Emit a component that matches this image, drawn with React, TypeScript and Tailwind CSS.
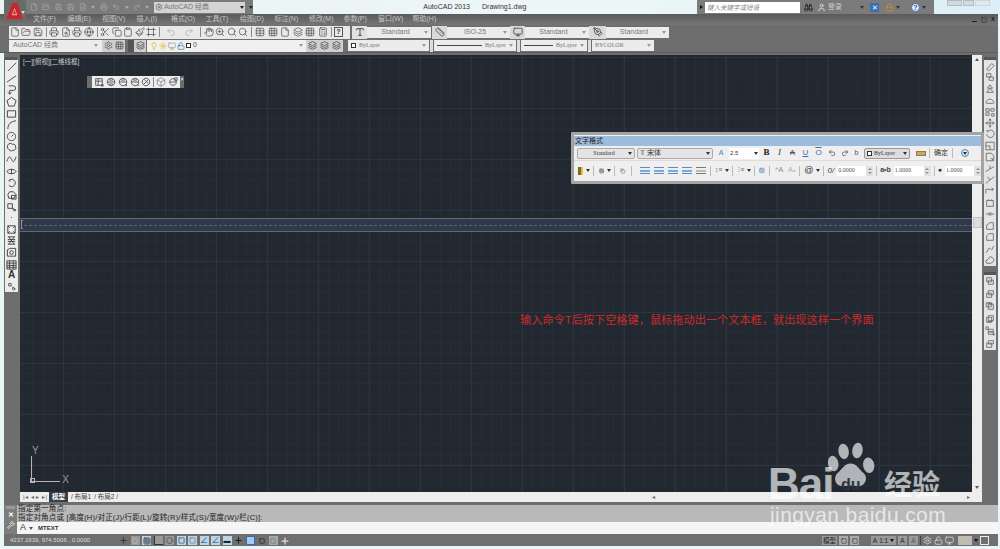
import {
  File, FolderOpen, Save, Printer, FileSearch, Scissors, Copy, Clipboard, Paintbrush, Undo2, Redo2, Hand,
  ZoomIn, Search, Grid3x3, Table, Box, Layers, Calculator, Settings, Sun, Lightbulb, LockOpen, Lock, User, Binoculars, Globe,
  Type, Ruler, Monitor, PenTool, Plus, Square, Circle, Frame, Wrench,
} from 'lucide-react';
import type { LucideIcon } from 'lucide-react';

const font = 'font-["Liberation_Sans","Noto_Sans_CJK_SC",sans-serif]';

const leftTools = [
  'M2 11 11 2',
  'M1 10 11 3M1 10h.1M11 3h.1',
  'M3 2h5a2.500 2.500 0 0 1 0 5H4v4l-2-2m2 2 2-2',
  'M6 1.500 11 5 9 11H3L1 5Z',
  'M1.500 3h9v7h-9Z',
  'M2 11C2 6 5 2.500 11 2',
  'M6 1.500a4.500 4.500 0 1 0 .01 0M6 6l2-2',
  'M3 2c2-1 3 0 4 .5 2-.5 4 1 3.500 3 1 2-1 4-3 3.500-2 1.500-4 .5-4.500-1C1 7 1 3.500 3 2Z',
  'M1 8c2-6 3-6 5-2s3 3 5-3',
  'M1 6c1-3 9-3 10 0-1 3-9 3-10 0ZM6 3v6',
  'M3 4a4 4 0 1 1 0 5M3 4l2 .5',
  'M4 3h4l3 3-2 4H3L2 6ZM6 7h5v4H6Z',
  'M2 3h5v5H2ZM7 8l4 2-2 1Z',
  'M5.500 6h1',
  'M2 2h8v8H2ZM2 2l2 2M10 2 8 4M2 10l2-2M10 10 8 8',
  'M2 2h8M2 10h8M3 2l6 8M9 2l-6 8M2 5h8M2 7h8',
  'M1.500 10V3l3-1.500h6V10ZM4 6a2 2 0 1 0 4 0 2 2 0 1 0-4 0',
  'M1 2h10v9H1ZM1 4.500h10M1 7h10M1 9h10M4 2v9M8 2v9',
];

const rightTools = [
  'M2 10 8 3l3 2.500-5.500 5.500H3Z',
  'M2 2h5v4H2ZM5 6h5v4H5Z',
  'M6 1 3 5h6L6 1ZM6 5 2 10h8Z',
  'M1 10c1-4 3-5 5-5s4 1 5 5M2 10h8',
  'M1 2h4v3H1ZM7 2h4v3H7ZM1 7h4v3H1ZM8 8h3v3H8Z',
  'M6 1v10M1 6h10M6 1 4.500 3M6 1l1.500 2M6 11 4.500 9M6 11l1.500-2M1 6l2-1.500M1 6l2 1.500M11 6 9 4.500M11 6 9 7.500',
  'M4 2a4.500 4.500 0 1 1-2 4M4 2 1.500 2.500M4 2 3.500 4',
  'M1 1.500h10v9H1ZM1 6h5v4.500',
  'M1.500 1.500h6l3 3v6h-9ZM7 8h2v2',
  'M1 9 11 3M6 2v4',
  'M1 10 11 2M3 2l3 4',
  'M1 9V4h9M8 2l2 2-2 2',
  'M2 3h8v7H2ZM4 3V1.500M8 3V1.500',
  'M1 6h4M7 6h4M5 4v4M7 4v4',
  'M2 10V5l4-3h4v8Z',
  'M2 10V6c0-2 2-4 4-4h4v8Z',
  'M1 10c3 0 2-5 4-5s2 2 3 2 1-4 3-5',
  'M2 10 1 7l3-2 2-3 3 1 2 3-2 3-3 1Z',
];

const orderTools = [
  'M2 2h6v5H2ZM4 5h6v5H4Z',
  'M4 2h6v5H4ZM2 5h6v5H2Z',
  'M1.500 2h6v5h-6ZM4 4h6v6H4ZM3 3h6',
  'M4 2h6v6H4ZM2 4h6v6H2ZM3 9h6',
  'M1 1h3v3H1ZM4 4h6v3H4ZM4 7h6v3H4ZM10 9h1v2h-1Z',
  'M4 2h6v4H4ZM2 5h6v5H2Z',
];

const view3d = [
  'M2 2h8v8H2ZM2 5h8M5 2v8M9 9h2v2H9Z',
  'M6 1.500a4.500 4.500 0 1 0 .01 0M1.500 6h9M3 3c2 1 4 1 6 0M3 9c2-1 4-1 6 0',
  'M6 1.500a4.500 4.500 0 1 0 .01 0M1.500 6h9M3 3c2 1 4 1 6 0M10 9v2M9 10h2',
  'M6 1.500a4.500 4.500 0 1 0 .01 0M1.500 6h9M3 3c2 1 4 1 6 0M9 10h2',
  'M6 1.500a4.500 4.500 0 1 0 .01 0M3 9l6-6M4 3l5 5',
];

// small stroke drawing on a 12 unit box
function Glyph({ d, size = 10, cls = 'text-[#4a4a4a]' }: { d: string; size?: number; cls?: string }) {
  return (
    <svg viewBox="0 0 12 12" width={size} height={size} fill="none" stroke="currentColor" strokeWidth="1" className={`shrink-0 ${cls}`}>
      <path d={d} />
    </svg>
  );
}

function Sep({ h = 'h-[10px]', c = 'bg-[#8a8a8a]' }: { h?: string; c?: string }) {
  return <div className={`w-px shrink-0 ${h} ${c}`} />;
}

function Caret({ cls = 'border-t-[#666]' }: { cls?: string }) {
  return <span className={`w-0 h-0 shrink-0 border-x-[2px] border-x-transparent border-t-[3px] ${cls}`} />;
}

function Tool({ icon: Icon, cls = 'text-[#444]', w = 'w-[11.500px]' }: { icon: LucideIcon; cls?: string; w?: string }) {
  return (
    <div className={`${w} flex justify-center shrink-0`}>
      <Icon size={10} strokeWidth={1.6} className={cls} />
    </div>
  );
}

function Select({ label, w, center = true, mono = false, line = false, swatch = false }: { label: string; w: string; center?: boolean; mono?: boolean; line?: boolean; swatch?: boolean }) {
  return (
    <div className={`${w} h-[11px] bg-[#ececec] flex items-center gap-[3px] px-[3px] shrink-0`}>
      {swatch && <span className="w-[5px] h-[5px] border border-[#333] bg-white shrink-0" />}
      {line && <span className="flex-1 h-px bg-[#444]" />}
      <span className={`${center && !line ? 'flex-1 text-center' : ''} ${!center && !line ? 'flex-1' : ''} text-[#777] whitespace-nowrap ${mono ? 'text-[6px] font-["Liberation_Serif",serif] text-[#555]' : 'text-[7px]'}`}>{label}</span>
      <Caret cls="border-t-[#999]" />
    </div>
  );
}

function ToolbarOne() {
  const a: LucideIcon[] = [File, FolderOpen, Save];
  const b: LucideIcon[] = [Printer, FileSearch, Printer, Globe];
  const c: LucideIcon[] = [Scissors, Copy, Clipboard, Paintbrush, Frame];
  const d: LucideIcon[] = [Hand, ZoomIn, Search, Search];
  const e: LucideIcon[] = [Table, Grid3x3, File, Layers, Grid3x3, Calculator];
  return (
    <div className="h-[14px] flex items-center bg-[#6e6e6e] pl-[9px]">
      <div className="w-[341px] h-[13px] bg-[#e9e9e9] flex items-center shrink-0">
        {a.map((I, i) => <Tool key={i} icon={I} />)}
        <div className="mx-[2px]"><Sep /></div>
        {b.map((I, i) => <Tool key={i} icon={I} />)}
        <div className="mx-[2px]"><Sep /></div>
        {c.map((I, i) => <Tool key={i} icon={I} />)}
        <div className="mx-[2px]"><Sep /></div>
        <Tool icon={Undo2} cls="text-[#aaa]" w="w-[18px]" />
        <Tool icon={Redo2} cls="text-[#aaa]" w="w-[18px]" />
        <div className="mx-[2px]"><Sep /></div>
        {d.map((I, i) => <Tool key={i} icon={I} />)}
        <div className="mx-[2px]"><Sep /></div>
        {e.map((I, i) => <Tool key={i} icon={I} w="w-[12.500px]" />)}
        <div className="mx-[2px]"><Sep /></div>
        <div className="w-[9px] h-[10px] border border-[#555] text-[7px] leading-[8px] text-center font-bold text-[#333]">?</div>
      </div>
      <div className="w-[15px] h-[13px] ml-[2px] bg-[#e0e0e0] flex justify-center items-center shrink-0"><Type size={10} className="text-[#333]" /></div>
      <Select label="Standard" w="w-[64px]" />
      <div className="w-[15px] h-[13px] ml-[1px] bg-[#d8d8d8] flex justify-center items-center shrink-0"><Ruler size={10} className="text-[#444]" /></div>
      <Select label="ISO-25" w="w-[63px]" />
      <div className="w-[15px] h-[13px] bg-[#d8d8d8] flex justify-center items-center shrink-0"><Monitor size={10} className="text-[#444]" /></div>
      <Select label="Standard" w="w-[64px]" />
      <div className="w-[17px] h-[13px] bg-[#d8d8d8] flex justify-center items-center shrink-0"><PenTool size={10} className="text-[#444]" /></div>
      <Select label="Standard" w="w-[63px]" />
    </div>
  );
}

function ToolbarTwo() {
  return (
    <div className="h-[14px] flex items-center bg-[#6e6e6e] pl-[9px] border-b border-[#5c5c5c]">
      <div className="w-[93px] h-[12px] bg-[#ececec] flex items-center px-[4px] shrink-0">
        <span className="flex-1 text-[7px] text-[#777]">AutoCAD 经典</span>
        <Caret cls="border-t-[#999]" />
      </div>
      <div className="w-[23px] h-[12px] bg-[#cfcfcf] flex items-center justify-center gap-[2px] shrink-0">
        <Settings size={9} className="text-[#555]" />
        <Grid3x3 size={9} className="text-[#555]" />
      </div>
      <div className="w-[6px] h-[12px] bg-[#555] shrink-0 ml-[3px]" />
      <div className="w-[12px] h-[12px] bg-[#cfcfcf] flex justify-center items-center shrink-0"><Layers size={9} className="text-[#444]" /></div>
      <div className="w-[159px] h-[12px] ml-[1px] bg-[#f0f0f0] flex items-center gap-[1px] px-[3px] shrink-0">
        <Lightbulb size={8} className="text-[#d9b400]" />
        <Sun size={8} className="text-[#d9b400]" />
        <Monitor size={8} className="text-[#999]" />
        <LockOpen size={8} className="text-[#2f6fb5]" />
        <span className="w-[5px] h-[5px] border border-[#333] bg-white" />
        <span className="flex-1 ml-[1px] text-[7px] text-[#555]">0</span>
        <Caret cls="border-t-[#999]" />
      </div>
      <div className="w-[37px] h-[12px] bg-[#cfcfcf] flex items-center justify-around shrink-0">
        <Layers size={9} className="text-[#444]" />
        <Layers size={9} className="text-[#444]" />
        <Layers size={9} className="text-[#444]" />
      </div>
      <div className="w-[5px] shrink-0" />
      <Select label="ByLayer" w="w-[81px]" center={false} mono swatch />
      <div className="w-[3px] h-[12px] mx-[1px] bg-[#ddd]" />
      <Select label="ByLayer" w="w-[82px]" mono line />
      <div className="w-[3px] h-[12px] mx-[1px] bg-[#ddd]" />
      <Select label="ByLayer" w="w-[66px]" mono line />
      <div className="w-[3px] h-[12px] mx-[1px] bg-[#ddd]" />
      <Select label="BYCOLOR" w="w-[62px]" center={false} mono />
    </div>
  );
}

function TextFormat() {
  const Num = ({ v, w }: { v: string; w: string }) => (
    <div className={`${w} h-[10px] bg-white flex items-center justify-between text-[6px] text-[#555] font-["Liberation_Serif",serif] shrink-0`}>
      <span className="pl-[1px]">{v}</span>
      <span className="w-[7px] h-[10px] bg-[#e2e2e2] flex flex-col items-center justify-around py-[1px]">
        <span className="w-0 h-0 border-x-[2px] border-x-transparent border-b-[2px] border-b-[#7a93b5]" />
        <span className="w-0 h-0 border-x-[2px] border-x-transparent border-t-[2px] border-t-[#7a93b5]" />
      </span>
    </div>
  );
  return (
    <div className={`absolute left-[571px] top-[132px] w-[413px] h-[52px] bg-[#efefef] border-[3px] border-[#a3a3a3] rounded-[1px] flex flex-col ${font}`}>
      <div className="h-[10px] mt-[1px] bg-[#9dbbdb] text-[7px] leading-[10px] text-[#222] pl-[1px]">文字格式</div>
      <div className="h-[15px] flex items-center gap-[2px] pl-[3px] border-b border-[#dcdcdc] text-[#333]">
        <div className="w-[58px] h-[11px] border border-[#aaa] rounded-[2px] bg-[#e4e4e4] flex items-center px-[2px]">
          <span className="flex-1 text-center text-[6px] font-['Liberation_Serif',serif]">Standard</span><Caret cls="border-t-[#333]" />
        </div>
        <div className="w-[76px] h-[11px] border border-[#aaa] rounded-[2px] bg-[#e4e4e4] flex items-center px-[2px]">
          <span className="flex-1 text-[7px]">𝕋 宋体</span><Caret cls="border-t-[#333]" />
        </div>
        <span className="w-[12px] text-center text-[7px] text-[#4a7db5]">A</span>
        <div className="w-[30px] h-[11px] bg-white flex items-center px-[1px] text-[6px]">
          <span className="flex-1">2.5</span><Caret cls="border-t-[#333]" />
        </div>
        <span className="w-[11px] text-center text-[9px] font-bold font-['Liberation_Serif',serif] text-[#222]">B</span>
        <span className="w-[11px] text-center text-[9px] italic font-['Liberation_Serif',serif] text-[#444]">I</span>
        <span className="w-[11px] text-center text-[8px] line-through text-[#555]">A</span>
        <span className="w-[11px] text-center text-[8px] underline text-[#3a6fb0]">U</span>
        <span className="w-[11px] text-center text-[8px] overline text-[#3a6fb0]">O</span>
        <Undo2 size={8} className="text-[#444] mx-[1.500px]" />
        <Redo2 size={8} className="text-[#444] mx-[1.500px]" />
        <span className="w-[9px] text-center text-[7px] text-[#555]">b</span>
        <div className="w-[46px] h-[11px] ml-[1px] border border-[#999] rounded-[2px] bg-[#ddd] flex items-center gap-[2px] px-[2px]">
          <span className="w-[5px] h-[5px] border border-[#333] bg-white" />
          <span className="flex-1 text-[6px] font-['Liberation_Serif',serif]">ByLayer</span><Caret cls="border-t-[#333]" />
        </div>
        <div className="w-[10px] h-[5px] ml-[4px] bg-[#c9a860] border border-[#8f7a4a]" />
        <div className="ml-[1px]"><Sep c="bg-[#bbb]" /></div>
        <span className="mx-[2px] text-[7px] text-[#333]">确定</span>
        <Sep c="bg-[#bbb]" />
        <div className="ml-[6px] w-[8px] h-[8px] rounded-full border border-[#5f82ad] bg-[#d8e4f2] flex items-center justify-center"><Caret cls="border-t-[#234]" /></div>
      </div>
      <div className="h-[19px] flex items-center gap-[3px] pl-[4px] text-[#555] whitespace-nowrap">
        <span className="w-[7px] h-[8px] bg-[#7a6a20] border-r-2 border-[#e0c040]" /><Caret cls="border-t-[#333]" /><Sep c="bg-[#bbb]" />
        <Grid3x3 size={8} className="ml-[2px]" /><Caret cls="border-t-[#333]" /><Sep c="bg-[#bbb]" />
        <Copy size={8} className="mx-[2px]" /><Sep c="bg-[#bbb]" />
        <div className="w-[2px] shrink-0" />
        {[0, 1, 2, 3, 4].map(i => (
          <div key={i} className="w-[10px] h-[7px] mx-[0.500px] flex flex-col justify-between shrink-0">
            <span className={`h-px ${i === 4 ? 'bg-[#777]' : 'bg-[#5a8ccc]'}`} />
            <span className={`h-[2px] ${i === 4 ? 'bg-[#bbb]' : 'bg-[#7fa8dc]'}`} />
            <span className={`h-px ${i === 4 ? 'bg-[#777]' : 'bg-[#5a8ccc]'}`} />
          </div>
        ))}
        <Sep c="bg-[#bbb]" />
        <span className="ml-[1px] text-[7px] text-[#4a6f9c]">↕≡</span><Caret cls="border-t-[#333]" /><Sep c="bg-[#bbb]" />
        <span className="ml-[2px] text-[7px] text-[#4a6f9c]">⁝≡</span><Caret cls="border-t-[#333]" /><Sep c="bg-[#bbb]" />
        <Table size={9} className="mx-[1px] text-[#4a7db5]" /><Sep c="bg-[#bbb]" />
        <span className="mx-[2px] text-[7px] text-[#888]">ᴬA</span>
        <span className="mr-[1px] text-[7px] text-[#aaa]">Aₐ</span><Sep c="bg-[#bbb]" />
        <span className="ml-[1px] text-[9px] text-[#333]">@</span><Caret cls="border-t-[#333]" /><Sep c="bg-[#bbb]" />
        <span className="text-[8px] italic text-[#444]">0/</span>
        <Num v="0.0000" w="w-[36px]" />
        <Sep c="bg-[#bbb]" />
        <span className="text-[7px] font-bold text-[#444]">a•b</span>
        <Num v="1.0000" w="w-[37px]" />
        <Sep c="bg-[#bbb]" />
        <span className="text-[7px] font-bold text-[#333]">●</span>
        <Num v="1.0000" w="w-[36px]" />
      </div>
    </div>
  );
}

function Watermark() {
  return (
    <div className="absolute left-[768px] top-[442px] w-[180px] h-[90px] text-white/65 pointer-events-none">
      <svg viewBox="0 0 60 56" width="52" height="50" className="absolute left-[60px] top-0" fill="currentColor">
        <ellipse cx="18" cy="10" rx="6" ry="9" transform="rotate(-8 18 10)" />
        <ellipse cx="34" cy="9" rx="6" ry="9" transform="rotate(8 34 9)" />
        <ellipse cx="6" cy="24" rx="6" ry="9" transform="rotate(-10 6 24)" />
        <ellipse cx="47" cy="26" rx="6.500" ry="9" transform="rotate(-10 47 26)" />
        <path d="M26 24c7 0 10 7 15 11 6 5 2 17-8 15-5-1-9-1-14 0-10 2-14-9-8-15 5-4 8-11 15-11Z" />
      </svg>
      <div className="absolute left-0 top-[24px] text-[44px] leading-[36px] font-bold font-['Liberation_Sans',sans-serif] tracking-[-1px]">Bai</div>
      <div className="absolute left-[73px] top-[35px] text-[16px] leading-[16px] font-bold text-[#2b3440] font-['Liberation_Sans',sans-serif]">du</div>
      <div className="absolute left-[116px] top-[25px] text-[28px] leading-[32px] font-bold font-['Noto_Sans_CJK_SC',sans-serif] whitespace-nowrap">经验</div>
      <div className="absolute left-[2px] top-[63px] text-[21px] leading-[20px] tracking-[0.400px] font-['Liberation_Sans',sans-serif] whitespace-nowrap">jingyan.baidu.com</div>
    </div>
  );
}

function Canvas() {
  return (
    <div className="flex-1 relative overflow-hidden bg-[#212830] bg-[linear-gradient(#2c3440_1px,transparent_1px),linear-gradient(90deg,#2c3440_1px,transparent_1px),linear-gradient(#262d37_1px,transparent_1px),linear-gradient(90deg,#262d37_1px,transparent_1px)] bg-[size:51px_51px,51px_51px,10.200px_10.200px,10.200px_10.200px] bg-[position:0_2px,43px_0,0_2px,43px_0]">
      <div className="absolute left-[3px] top-[2px] text-[6.500px] leading-[9px] text-[#d0d0d0] whitespace-nowrap">[一][俯视][二维线框]</div>
      <div className="absolute left-[67px] top-[21px] h-[12px] flex">
        <div className="w-[5px] bg-[#6c6c6c]" />
        <div className="w-[88px] bg-[#ededed] flex items-center justify-around px-[1px]">
          {view3d.map(d => <Glyph key={d} d={d} />)}
          <Sep />
          <Box size={10} strokeWidth={1.3} className="text-[#555]" />
          <Glyph d="M6 2a4 4 0 1 0 .01 0M2 6h8M8 1h3v3H8Z" />
        </div>
        <div className="w-[4px] bg-[#6c6c6c] text-[5px] leading-[6px] text-white text-center">×</div>
      </div>
      <div className="absolute left-0 right-0 top-[163px] h-[14px] bg-[#2e3a49] border-y border-[#6b6864]">
        <div className="absolute left-[1px] top-[1px] w-[2px] h-[9px] border-l border-y border-[#9a958c]" />
        <div className="absolute left-[4px] right-0 top-[6px] border-t border-dashed border-[#5d6672]" />
      </div>
      <div className={`absolute left-[500px] top-[257px] text-[11.200px] leading-[16px] text-[#cc2a2a] whitespace-nowrap ${font}`}>输入命令T后按下空格键，鼠标拖动出一个文本框，就出现这样一个界面</div>
      <div className="absolute left-[10px] bottom-[9px] w-[30px] h-[36px] text-[#9a9a9a]">
        <div className="absolute left-[1px] top-[9px] bottom-0 w-px bg-[#b5b5b5]" />
        <div className="absolute left-[1px] right-0 bottom-[1px] h-px bg-[#b5b5b5]" />
        <div className="absolute left-0 bottom-0 w-[5px] h-[5px] border border-[#b5b5b5]" />
        <div className="absolute left-[2px] top-[-1px] text-[10px] leading-[10px]">Y</div>
        <div className="absolute right-[-9px] bottom-[-2px] text-[10px] leading-[10px]">X</div>
      </div>
    </div>
  );
}

export default function App() {
  const menus = ['文件(F)', '编辑(E)', '视图(V)', '插入(I)', '格式(O)', '工具(T)', '绘图(D)', '标注(N)', '修改(M)', '参数(P)', '窗口(W)', '帮助(H)'];
  return (
    <div className={`relative w-[1000px] h-[549px] overflow-hidden bg-[#eaf5f6] flex flex-col ${font}`}>
      {/* title strip */}
      <div className="h-[14px] flex shrink-0 bg-[linear-gradient(90deg,#e8f3f4,#eef7f7_60%,#dceef6)]">
        <div className="w-[245px] ml-[8px] h-full bg-[#7b7b7b] flex items-center pl-[22px] gap-[4.500px] shrink-0">
          <File size={8} className="text-[#aaa]" />
          <FolderOpen size={8} className="text-[#aaa]" />
          <Save size={8} className="text-[#aaa]" />
          <Save size={8} className="text-[#aaa]" />
          <FileSearch size={8} className="text-[#aaa]" />
          <Caret cls="border-t-[#aaa]" />
          <Printer size={8} className="text-[#aaa]" />
          <Undo2 size={8} className="text-[#aaa]" />
          <Caret cls="border-t-[#aaa]" />
          <Redo2 size={8} className="text-[#aaa]" />
          <Caret cls="border-t-[#aaa]" />
          <div className="w-[93px] h-[11px] bg-[#d3d3d3] flex items-center gap-[1px] px-[1px]">
            <Settings size={8} className="text-[#666]" />
            <span className="flex-1 text-[7px] text-[#777]">AutoCAD 经典</span>
            <Caret cls="border-t-[#222]" />
          </div>
          <Caret cls="border-t-[#222]" />
        </div>
        <div className="w-[217px] flex items-center justify-end text-[7px] text-[#333] whitespace-nowrap">AutoCAD 2013</div>
        <div className="ml-[12px] flex items-center text-[7px] text-[#333] whitespace-nowrap">Drawing1.dwg</div>
        <div className="flex-1" />
        <div className="w-[237px] mr-[66px] h-full bg-[#7b7b7b] flex items-center pl-[3px] gap-[2px] text-[#ccc] shrink-0">
          <span className="w-0 h-0 border-y-[2px] border-y-transparent border-l-[3px] border-l-[#111]" />
          <div className="w-[95px] h-[11px] bg-white text-[6.500px] leading-[11px] pl-[2px] italic text-[#888]">键入关键字或短语</div>
          <Binoculars size={9} className="ml-[2px] text-[#222]" />
          <User size={9} className="ml-[2px] text-[#eee]" />
          <span className="flex-1 text-[7px]">登录</span>
          <Caret cls="border-t-[#333]" />
          <div className="w-[9px] h-[9px] ml-[4px] bg-[#3a6fb0] text-[7px] leading-[9px] text-center text-white">✕</div>
          <Lock size={9} className="ml-[4px] text-[#e08a30]" />
          <Caret cls="border-t-[#333]" />
          <div className="w-[9px] h-[9px] ml-[9px] rounded-full bg-[#eef] border border-[#3a6fb0] text-[7px] leading-[8px] text-center font-bold text-[#2a5a9a]">?</div>
          <Caret cls="border-t-[#333]" />
          <div className="w-[6px]" />
        </div>
      </div>
      <div className="absolute left-[947px] top-0 h-[6px] flex gap-[1px]">
        <div className="w-[15px] h-[6px] bg-[#cfdbe1] border border-[#b0bdc4]" />
        <div className="w-[11px] h-[6px] bg-[#cfdbe1] border border-[#b0bdc4]" />
        <div className="w-[15px] h-[6px] bg-[#e3eaee] border border-[#ccd6db]" />
      </div>

      {/* window body */}
      <div className="flex-1 ml-[4px] mr-[2px] flex flex-col min-h-0 bg-[#6e6e6e]">
        <div className="h-[11px] -ml-[4px] pl-[4px] flex items-center bg-[linear-gradient(#5a5a5a,#767676)] text-[7px] text-[#c5c5c5] shrink-0">
          <div className="w-[29px] shrink-0" />
          {menus.map(m => <div key={m} className="w-[34.500px] shrink-0 whitespace-nowrap">{m}</div>)}
          <div className="flex-1" />
          <div className="flex items-center gap-[4px] pr-[3px] text-[#222] text-[7px] font-bold">
            <span className="w-[5px] h-px bg-[#222] mt-[4px]" />
            <Square size={6} />
            <span>x</span>
          </div>
        </div>
        <div className="-ml-[4px]"><ToolbarOne /></div>
        <div className="-ml-[4px]"><ToolbarTwo /></div>

        <div className="flex-1 flex min-h-0 pt-[2px]">
          <div className="w-[16px] shrink-0 flex flex-col">
            <div className="ml-[1px] w-[12px] h-[3px] mt-[2px] bg-[#565656]" />
            <div className="ml-[1px] w-[13px] h-[232px] bg-[#ececec] flex flex-col items-center pt-[1px] justify-between pb-[1px]">
              {leftTools.map(d => <Glyph key={d} d={d} size={11} cls="text-[#3f3f3f]" />)}
              <span className="text-[10px] leading-[10px] font-bold text-[#333]">A</span>
              <Glyph d="M2 3h3v3H2ZM6 7l4 3M8 8a1.500 1.500 0 1 0 .01 0" />
            </div>
          </div>
          <div className="flex-1 flex flex-col min-w-0">
            <div className="flex-1 flex min-h-0">
              <Canvas />
              <div className="w-[10px] bg-[#ededed] shrink-0 flex flex-col items-center py-[3px]">
                <span className="w-0 h-0 border-x-[2px] border-x-transparent border-b-[3px] border-b-[#555]" />
                <div className="mt-[156px] w-[9px] h-[11px] bg-[#dcdcdc] border border-[#c4c4c4]" />
                <div className="flex-1" />
                <span className="w-0 h-0 border-x-[2px] border-x-transparent border-t-[3px] border-t-[#555]" />
              </div>
            </div>
            <div className="h-[10px] flex bg-[#ededed] shrink-0 text-[6.500px] text-[#444] items-center">
              <div className="w-[29px] flex items-center justify-between pl-[3px] pr-[2px] text-[#666] text-[6px]"><span>|◂</span><span>◂</span><span>▸</span><span>▸|</span></div>
              <div className="h-[10px] px-[3px] bg-[#3a3f46] text-white font-bold leading-[10px]">模型</div>
              <div className="ml-[3px]">/ 布局1</div>
              <div className="ml-[3px]">/ 布局2 /</div>
              <div className="flex-1" />
              <div className="w-[330px] flex justify-between pr-[12px] text-[#666] text-[6px]"><span>◂</span><span>▸</span></div>
            </div>
          </div>
          <div className="w-[16px] shrink-0 flex flex-col items-center pt-[2px]">
            <div className="w-[12px] h-[3px] bg-[#565656]" />
            <div className="w-[12px] h-[206px] bg-[#e4e4e4] flex flex-col items-center justify-between py-[1px]">
              {rightTools.map(d => <Glyph key={d} d={d} cls="text-[#666]" />)}
            </div>
            <div className="w-[12px] h-[3px] mt-[6px] bg-[#565656]" />
            <div className="w-[12px] h-[75px] bg-[#e4e4e4] flex flex-col items-center justify-between py-[1px]">
              {orderTools.map(d => <Glyph key={d} d={d} cls="text-[#666]" />)}
            </div>
          </div>
        </div>

        {/* command line */}
        <div className="h-[29px] mt-[3px] shrink-0 flex bg-[#6e6e6e]">
          <div className="w-[13px] shrink-0 flex flex-col items-center text-white text-[7px] font-bold bg-[#7d7d7d]">
            <span className="w-[9px] h-[3px] mt-[1px] bg-[#9a9a9a]" />
            <span className="leading-[10px] mt-[1px]">✕</span>
            <Wrench size={8} className="mt-[1px]" />
          </div>
          <div className="flex-1 flex flex-col">
            <div className="h-[17px] bg-[#b9b9b9] text-[7.500px] leading-[8.500px] text-[#222] pl-[1px] whitespace-nowrap tracking-[0.200px]">
              <div>指定第一角点:</div>
              <div>指定对角点或 [高度(H)/对正(J)/行距(L)/旋转(R)/样式(S)/宽度(W)/栏(C)]:</div>
            </div>
            <div className="h-[12px] bg-[#f5f5f5] flex items-center pl-[3px] gap-[3px] text-[#333]">
              <span className="text-[9px]">A</span>
              <Caret cls="border-t-[#555]" />
              <span className="text-[6px] font-bold ml-[2px]">MTEXT</span>
            </div>
          </div>
        </div>

        {/* status bar */}
        <div className="h-[11px] mt-[1px] shrink-0 bg-[#6f6f6f] flex items-center text-[#ddd] text-[6px]">
          <div className="w-[115px] pl-[6px] whitespace-nowrap shrink-0">4237.1939, 974.5006 , 0.0000</div>
          <div className="flex items-center gap-[2.500px] shrink-0">
            <Plus size={9} strokeWidth={2.500} className="text-[#333]" />
            <div className="w-[9px] h-[9px] bg-[#999] flex items-center justify-center"><Square size={6} className="text-[#ccc]" /></div>
            <div className="w-[9px] h-[9px] bg-[#b9d5e8] flex items-center justify-center"><Grid3x3 size={8} className="text-[#333]" /></div>
            <div className="w-[9px] h-[9px] bg-[#999] border-l border-b border-[#333]" />
            <div className="w-[9px] h-[9px] bg-[#999] flex items-center justify-center"><Circle size={7} className="text-[#333]" /></div>
            <div className="w-[9px] h-[9px] bg-[#b9d5e8] flex items-center justify-center"><Square size={7} className="text-[#234]" /></div>
            <div className="w-[9px] h-[9px] bg-[#b9d5e8] flex items-center justify-center"><Square size={7} className="text-[#666]" /></div>
            <div className="w-[9px] h-[9px] bg-[#b9d5e8] text-[#246] text-[8px] leading-[9px] text-center">∠</div>
            <div className="w-[9px] h-[9px] bg-[#b9d5e8] text-[#246] text-[8px] leading-[9px] text-center">∠</div>
            <div className="w-[9px] h-[9px] bg-[#b9d5e8] text-[#222] text-[7px] leading-[9px] text-center">▬</div>
            <Plus size={9} strokeWidth={2.500} className="text-[#111]" />
            <div className="w-[9px] h-[9px] bg-[#a9c8ea] border border-[#2f6fb5]" />
            <div className="w-[9px] h-[9px] flex items-center justify-center"><Square size={6} className="text-[#111]" /></div>
            <div className="w-[9px] h-[9px] bg-[#a8a8a8] flex items-center justify-center"><Square size={6} className="text-[#2f8f2f]" /></div>
            <Plus size={10} strokeWidth={3} className="text-[#ddd]" />
          </div>
          <div className="flex-1" />
          <div className="flex items-center gap-[2px] pr-[3px] text-[#222] text-[6.500px] shrink-0">
            <div className="w-[15px] h-[9px] bg-[#999] text-center leading-[9px]">模型</div>
            <div className="w-[9px] h-[9px] bg-[#aaa] flex items-center justify-center"><Square size={6} /></div>
            <div className="w-[9px] h-[9px] bg-[#aaa] flex items-center justify-center"><Square size={6} /></div>
            <div className="w-[8px]" />
            <div className="w-[25px] h-[9px] bg-[#999] flex items-center justify-center gap-[2px]">
              <span>A</span><span>1:1</span><Caret cls="border-t-[#111]" />
            </div>
            <div className="w-[9px] h-[9px] bg-[#999] text-center leading-[9px]">A</div>
            <div className="w-[9px] h-[9px] bg-[#999] text-center leading-[9px] text-[#555]">A</div>
            <div className="w-[1px] h-[9px] bg-[#444]" />
            <Settings size={9} className="text-[#ddd]" />
            <LockOpen size={9} className="text-[#ddd]" />
            <Monitor size={9} className="text-[#ddd]" />
            <div className="w-[14px] h-[9px] ml-[2px] bg-[#bbb] flex items-center justify-center"><Lightbulb size={8} className="text-[#e8c840]" /></div>
            <Caret cls="border-t-[#111]" />
            <div className="w-[9px] h-[9px] border border-[#eee]" />
            <div className="w-[4px]" />
          </div>
        </div>
      </div>
      <div className="h-[3px] shrink-0" />

      {/* logo tile */}
      <div className="absolute left-[4px] top-0 w-[22px] h-[22px] bg-[#6a6a6a]">
        <svg viewBox="0 0 20 20" width="19" height="19" className="absolute left-[1px] top-[2px]">
          <path d="M8 1h5l6 17H1Z" fill="#c9262c" />
          <path d="M10 6 7 14h6Z" fill="#e8a0a0" />
          <path d="M10 8.500 8.500 12.500h3Z" fill="#c9262c" />
        </svg>
        <span className="absolute right-[1px] top-[11px] w-0 h-0 border-x-[2px] border-x-transparent border-t-[3px] border-t-[#ddd]" />
      </div>

      <TextFormat />
      <Watermark />
    </div>
  );
}
